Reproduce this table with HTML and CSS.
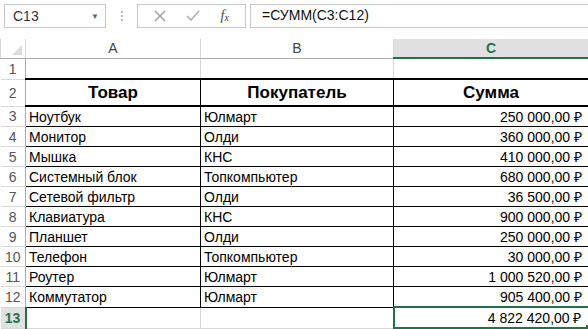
FILE: index.html
```html
<!DOCTYPE html>
<html lang="ru">

<head>
    <meta charset="utf-8">
    <title>Сумма</title>
    <link rel="stylesheet" href="styles.css">
</head>

<body>
    <div class="formula-bar">
        <div class="name-box">
            <span>C13</span>
            <span class="drop">&#9660;</span>
        </div>
        <div class="grip">
            <i></i><i></i><i></i>
        </div>
        <div class="tools">
            <svg width="12" height="12" viewBox="0 0 12 12"><path d="M1 1 L11 11 M11 1 L1 11" stroke="#9a9a9a" stroke-width="1.4" fill="none"/></svg>
            <svg width="14" height="12" viewBox="0 0 14 12"><path d="M1 6 L5 10 L13 1" stroke="#b0b0b0" stroke-width="1.6" fill="none"/></svg>
            <span class="fx">f<sub>x</sub></span>
        </div>
        <div class="formula">=СУММ(C3:C12)</div>
    </div>

    <table class="sheet">
        <colgroup>
            <col class="c-num">
            <col class="c-a">
            <col class="c-b">
            <col class="c-c">
        </colgroup>
        <tr class="heads">
            <th class="corner"><span class="tri"></span></th>
            <th>A</th>
            <th>B</th>
            <th class="active">C</th>
        </tr>
        <tr class="blank">
            <td class="num">1</td>
            <td></td>
            <td></td>
            <td></td>
        </tr>
        <tr class="title">
            <td class="num">2</td>
            <td>Товар</td>
            <td>Покупатель</td>
            <td>Сумма</td>
        </tr>
        <tr class="data"><td class="num">3</td><td>Ноутбук</td><td>Юлмарт</td><td class="money">250 000,00 ₽</td></tr>
        <tr class="data"><td class="num">4</td><td>Монитор</td><td>Олди</td><td class="money">360 000,00 ₽</td></tr>
        <tr class="data"><td class="num">5</td><td>Мышка</td><td>КНС</td><td class="money">410 000,00 ₽</td></tr>
        <tr class="data"><td class="num">6</td><td>Системный блок</td><td>Топкомпьютер</td><td class="money">680 000,00 ₽</td></tr>
        <tr class="data"><td class="num">7</td><td>Сетевой фильтр</td><td>Олди</td><td class="money">36 500,00 ₽</td></tr>
        <tr class="data"><td class="num">8</td><td>Клавиатура</td><td>КНС</td><td class="money">900 000,00 ₽</td></tr>
        <tr class="data"><td class="num">9</td><td>Планшет</td><td>Олди</td><td class="money">250 000,00 ₽</td></tr>
        <tr class="data"><td class="num">10</td><td>Телефон</td><td>Топкомпьютер</td><td class="money">30 000,00 ₽</td></tr>
        <tr class="data"><td class="num">11</td><td>Роутер</td><td>Юлмарт</td><td class="money">1 000 520,00 ₽</td></tr>
        <tr class="data"><td class="num">12</td><td>Коммутатор</td><td>Юлмарт</td><td class="money">905 400,00 ₽</td></tr>
        <tr class="total">
            <td class="num active">13</td>
            <td></td>
            <td></td>
            <td class="money selected">4 822 420,00 ₽<span class="handle"></span></td>
        </tr>
        <tr class="blank">
            <td class="num"></td>
            <td></td>
            <td></td>
            <td></td>
        </tr>
    </table>
</body>

</html>
```

FILE: styles.css
```css
html,
body {
    margin: 0;
    background: #fff;
    overflow: hidden;
}

body {
    font-family: "Liberation Sans", Arial, sans-serif;
    font-size: 14px;
    color: #000;
}

/* formula bar */
.formula-bar {
    display: flex;
    align-items: center;
    height: 24px;
    padding: 4px 0 0 4px;
    margin-bottom: 11px;
}

.name-box {
    display: flex;
    align-items: center;
    justify-content: space-between;
    box-sizing: border-box;
    width: 102px;
    height: 24px;
    padding: 0 6px 0 8px;
    border: 1px solid #c6c6c6;
    color: #333;
    font-size: 14px;
}

.name-box .drop {
    font-size: 8px;
    color: #666;
}

.grip {
    display: flex;
    flex-direction: column;
    gap: 2px;
    width: 31px;
    align-items: center;
}

.grip i {
    display: block;
    width: 2px;
    height: 2px;
    background: #b9b9b9;
}

.tools {
    display: flex;
    align-items: center;
    justify-content: space-around;
    box-sizing: border-box;
    width: 109px;
    height: 24px;
    padding: 0 6px;
    border: 1px solid #c6c6c6;
}

.fx {
    font-family: "Liberation Serif", serif;
    font-style: italic;
    font-size: 14px;
    color: #444;
}

.fx sub {
    font-size: 10px;
    vertical-align: -1px;
}

.formula {
    flex: 1;
    box-sizing: border-box;
    height: 24px;
    margin-left: 4px;
    padding: 2px 0 0 11px;
    border: 1px solid #c6c6c6;
    border-right: none;
    font-size: 14px;
    color: #111;
}

/* grid */
.sheet {
    border-collapse: collapse;
    table-layout: fixed;
    width: 588px;
}

.c-num { width: 25px; }
.c-a { width: 175px; }
.c-b { width: 193px; }
.c-c { width: 195px; }

.sheet th,
.sheet td {
    padding: 0 3px;
    border: 1px solid #d8d8d8;
    white-space: nowrap;
    overflow: hidden;
}

.heads th {
    height: 18px;
    font-weight: normal;
    color: #444;
    font-size: 14px;
    border-top: none;
    border-bottom-color: #ababab;
}

.heads th.active {
    background: #e1e1e1;
    color: #217346;
    font-weight: bold;
    border-bottom: 2px solid #217346;
}

.corner {
    position: relative;
}

.tri {
    position: absolute;
    right: 3px;
    bottom: 3px;
    border-style: solid;
    border-width: 0 0 10px 10px;
    border-color: transparent transparent #dcdcdc transparent;
}

.sheet td.num {
    padding: 0;
    text-align: center;
    color: #555;
    border-left: none;
    border-right-color: #ababab;
    font-size: 14px;
}

.sheet td.num.active {
    background: #e1e1e1;
    color: #217346;
    font-weight: bold;
    border-right: 2px solid #217346;
}

.blank td {
    height: 19px;
}

.title td {
    height: 25px;
    text-align: center;
    font-weight: bold;
    font-size: 17px;
    border: 1px solid #000;
    border-top: 2px solid #000;
    border-bottom: 2px solid #000;
}

.data td {
    height: 19px;
    border: 1px solid #000;
    padding-top: 0;
}

.data td.num,
.title td.num {
    border-top-color: #d8d8d8;
    border-bottom-color: #d8d8d8;
    border-top-width: 1px;
    border-bottom-width: 1px;
    border-left: none;
    border-right: 1px solid #ababab;
    font-weight: normal;
    font-size: 14px;
}

.total td {
    height: 19px;
}

.money {
    text-align: right;
    padding-right: 6px !important;
}

.sheet td.selected {
    position: relative;
    border: 2px solid #217346;
}

.handle {
    position: absolute;
    right: -4px;
    bottom: -4px;
    width: 5px;
    height: 5px;
    background: #217346;
    border: 1px solid #fff;
}
```
